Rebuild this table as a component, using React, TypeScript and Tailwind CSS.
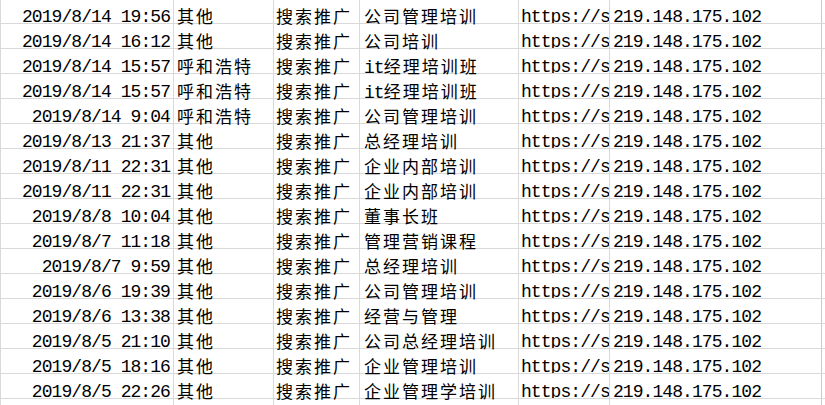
const rows = [
  ["2019/8/14 19:56", "其他", "公司管理培训"],
  ["2019/8/14 16:12", "其他", "公司培训"],
  ["2019/8/14 15:57", "呼和浩特", "it经理培训班"],
  ["2019/8/14 15:57", "呼和浩特", "it经理培训班"],
  ["2019/8/14 9:04", "呼和浩特", "公司管理培训"],
  ["2019/8/13 21:37", "其他", "总经理培训"],
  ["2019/8/11 22:31", "其他", "企业内部培训"],
  ["2019/8/11 22:31", "其他", "企业内部培训"],
  ["2019/8/8 10:04", "其他", "董事长班"],
  ["2019/8/7 11:18", "其他", "管理营销课程"],
  ["2019/8/7 9:59", "其他", "总经理培训"],
  ["2019/8/6 19:39", "其他", "公司管理培训"],
  ["2019/8/6 13:38", "其他", "经营与管理"],
  ["2019/8/5 21:10", "其他", "公司总经理培训"],
  ["2019/8/5 18:16", "其他", "企业管理培训"],
  ["2019/8/5 22:26", "其他", "企业管理学培训"],
];

// the sheet only shows the start of the url before the next column covers it
const url = "https://s";
const ip = "219.148.175.102";

// Latin in a mono face, CJK in Noto with tracking so both keep the sheet's half/full width pitch
function Runs({ text }: { text: string }) {
  const parts = text.split(/([\u4e00-\u9fff]+)/).filter(Boolean);
  return (
    <>
      {parts.map((part, i) =>
        /[\u4e00-\u9fff]/.test(part) ? (
          <span key={i} className="font-['Noto_Sans_CJK_SC',sans-serif] text-[17px] tracking-[2px]">
            {part}
          </span>
        ) : (
          <span key={i} className="font-['Liberation_Mono',monospace] text-[18px] tracking-[-0.93px]">
            {part}
          </span>
        ),
      )}
    </>
  );
}

function Cell({ width, align = "left", className = "", children }: { width: string; align?: "left" | "right"; className?: string; children?: React.ReactNode }) {
  return (
    <div
      className={`${width} h-full shrink-0 whitespace-nowrap border-r border-[#d9d9d9] pt-[5px] leading-[24px] text-black ${
        align === "right" ? "pr-[3px] text-right" : ""
      } ${className}`}
    >
      {children}
    </div>
  );
}

function Row({ cells }: { cells?: string[] }) {
  const [date, city, keyword] = cells ?? ["", "", ""];
  const filled = Boolean(cells);
  return (
    <div className="flex h-[25px] box-border border-b border-[#d9d9d9]">
      <Cell width="w-[174px] border-l" align="right">
        {filled && <Runs text={date} />}
      </Cell>
      <Cell width="w-[100px]" className="pl-[3px]">
        {filled && <Runs text={city} />}
      </Cell>
      <Cell width="w-[86px]" className="pl-[2px]">
        {filled && <Runs text="搜索推广" />}
      </Cell>
      <Cell width="w-[159px]" className="pl-[4px]">
        {filled && <Runs text={keyword} />}
      </Cell>
      <Cell width="w-[91px]" className="overflow-hidden pl-[2px]">
        {filled && <Runs text={url} />}
      </Cell>
      <Cell width="w-[212px] !border-[#bcd3bc]" className="pl-[3px]">
        {filled && <Runs text={ip} />}
      </Cell>
    </div>
  );
}

export default function App() {
  return (
    <main className="h-[405px] w-[825px] overflow-hidden bg-white">
      <div className="-mt-[1px]">
        {rows.map((row, i) => (
          <Row key={i} cells={row} />
        ))}
        <Row />
      </div>
    </main>
  );
}
